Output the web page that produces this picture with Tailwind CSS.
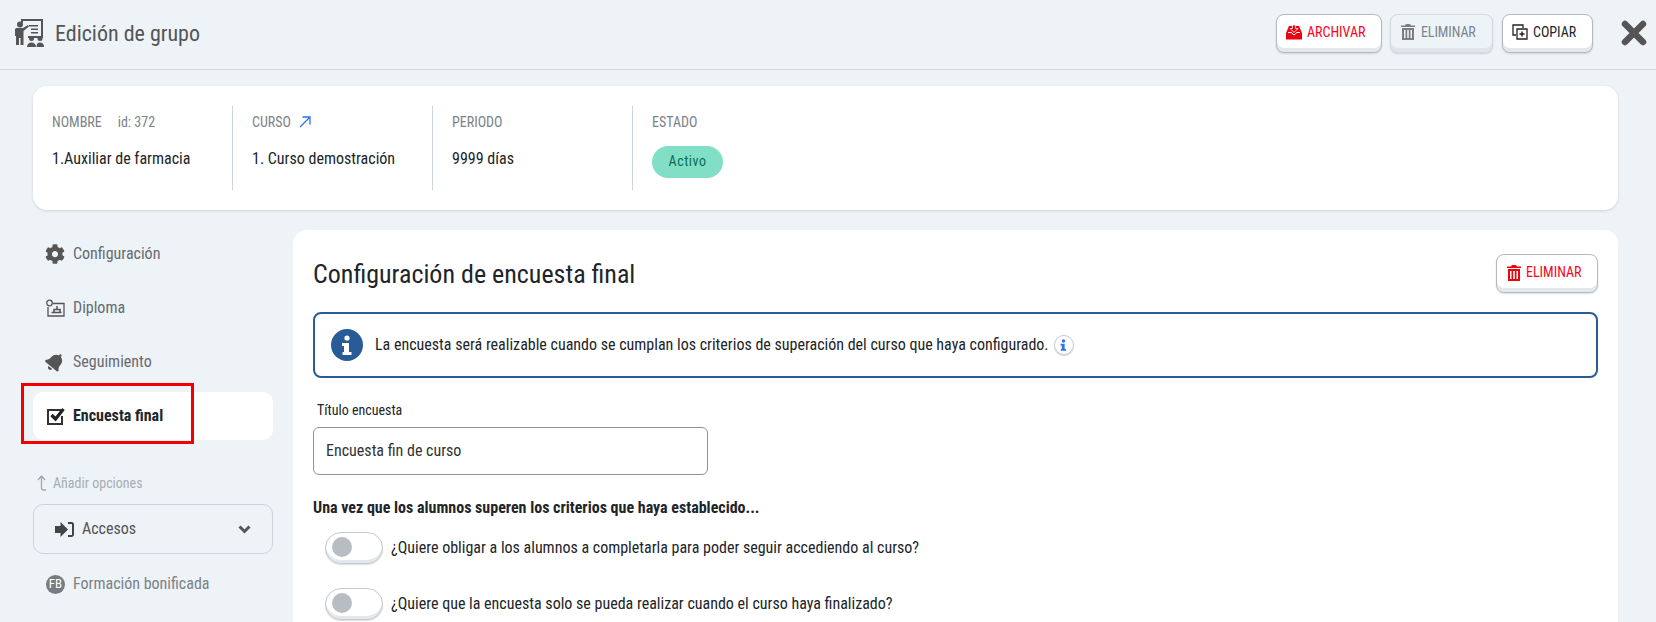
<!DOCTYPE html>
<html lang="es">
<head>
  <meta charset="UTF-8" />
  <title>Edición de grupo</title>
  <script src="https://cdn.jsdelivr.net/npm/@tailwindcss/browser@4"></script>
</head>
<body class="bg-[#eef3f7] h-[622px] overflow-hidden font-['Roboto',sans-serif] [font-stretch:75%] text-[#212529]">

  <!-- Header -->
  <header class="h-[70px] border-b border-[#d3d8dc] flex items-center pl-[14px] pb-[3px]">
    <svg class="w-[30px] h-[30px] text-[#555]" viewBox="0 0 30 30" fill="currentColor">
      <path d="M7 1h22v19h-15v-2h13V3H9v2H7z"/><path d="M15 7h9v1.500h-9zM17 10.500h7V12h-7zM17 14h7v1.500h-7z"/>
      <circle cx="6" cy="6.500" r="3"/><path d="M1 11.500c0-1 1-1.500 2-1.500h6l5-3 1 1.500-5.500 4.500v14H6.500v-7H5v7H2v-9l-1 0z"/>
      <circle cx="17.500" cy="20.500" r="2.500"/><path d="M13 29c0-3 2-4.500 4.500-4.500S22 26 22 29z"/>
      <circle cx="26" cy="20.500" r="2.500"/><path d="M22.500 29c0-3 1-4.500 3.500-4.500S30 26 30 29z"/>
    </svg>
    <h1 class="ml-[11px] text-[22px] text-[#555]">Edición de grupo</h1>
    <div class="ml-auto flex items-center">
      <button class="w-[106px] h-[39px] rounded-lg bg-white border border-[#b4bac0] shadow-[inset_0_-4px_0_#e3e8ec,0_1px_2px_#0002] flex items-center pl-[9px] gap-[5px] text-[14px] text-[#f5051d] pb-[2px]">
        <svg class="w-[16px] h-[15px]" viewBox="0 0 16 15" fill="#e8050f">
          <path d="M3 1h10l3 7v6.500H0V8z"/>
          <path d="M2 7.500h3.500l1.500 2h2l1.500-2H14" fill="none" stroke="#fff" stroke-width="1"/>
          <path d="M6.500 0h3v3.500H12L8 7.500l-4-4h2.500z" stroke="#fff" stroke-width="0.800"/>
        </svg>
        ARCHIVAR
      </button>
      <button class="ml-[8px] w-[103px] h-[39px] rounded-lg bg-[#eef3f7] border border-[#d5dade] shadow-[inset_0_-4px_0_#dfe5ea,0_1px_2px_#0002] flex items-center pl-[10px] gap-[6px] text-[14px] tracking-[-0.1px] text-[#7b858e] pb-[2px]">
        <svg class="w-[14px] h-[16px]" viewBox="0 0 14 16" fill="#7b7f84"><path d="M5 0h4l1 1.500h4V3H0V1.500h4z"/><path fill-rule="evenodd" d="M1 4h12v12H1zM3 6v8h1.500V6zM6.200 6v8h1.600V6zM9.500 6v8H11V6z"/></svg>
        ELIMINAR
      </button>
      <button class="ml-[9px] w-[91px] h-[39px] rounded-lg bg-white border border-[#b4bac0] shadow-[inset_0_-4px_0_#e3e8ec,0_1px_2px_#0002] flex items-center pl-[9px] gap-[5px] text-[14px] text-[#212529] pb-[2px]">
        <svg class="w-[16px] h-[16px]" viewBox="0 0 16 16" fill="none" stroke="#222" stroke-width="1.300"><path d="M11 4V1H1v10h3"/><path d="M5 5h10v10H5z"/><path d="M10 7.500v5M7.500 10h5" stroke-width="1.500"/></svg>
        COPIAR
      </button>
      <button class="ml-[27px] mr-[9px] w-[27px] h-[27px] flex items-center justify-center">
        <svg class="w-[26px] h-[26px]" viewBox="0 0 26 26" stroke="#555" stroke-width="6.500" stroke-linecap="round"><path d="M4 4l18 18M22 4L4 22"/></svg>
      </button>
    </div>
  </header>

  <!-- Group summary -->
  <section class="ml-[33px] mr-[38px] mt-[16px] h-[124px] bg-white rounded-[14px] shadow-[0_1px_3px_#0002] flex items-center">
    <div class="w-[200px] h-[84px] pl-[19px] border-r border-[#ccd3da]">
      <p class="flex items-center text-[14px] text-[#7b8288] h-[20px] mt-[6px]"><span class="mt-[1px]">NOMBRE</span><span class="ml-[16px]">id: 372</span></p>
      <p class="mt-[15px] text-[16px]">1.Auxiliar de farmacia</p>
    </div>
    <div class="w-[200px] h-[84px] pl-[19px] border-r border-[#ccd3da]">
      <p class="flex items-center text-[14px] text-[#7b8288] h-[20px] mt-[6px]">CURSO
        <svg class="ml-[8px] w-[12px] h-[12px]" viewBox="0 0 12 12" fill="none" stroke="#2a76e8" stroke-width="1.300"><path d="M1 11L11 1M3.500 1H11v7.500"/></svg>
      </p>
      <p class="mt-[15px] text-[16px]">1. Curso demostración</p>
    </div>
    <div class="w-[200px] h-[84px] pl-[19px] border-r border-[#ccd3da]">
      <p class="text-[14px] text-[#7b8288] h-[20px] mt-[6px] flex items-center">PERIODO</p>
      <p class="mt-[15px] text-[16px]">9999 días</p>
    </div>
    <div class="h-[84px] pl-[19px]">
      <p class="text-[14px] text-[#7b8288] h-[20px] mt-[6px] flex items-center">ESTADO</p>
      <span class="mt-[14px] w-[71px] h-[32px] rounded-full bg-[#81dfc6] text-[#0c6b56] text-[14px] tracking-[0.5px] flex items-center justify-center pb-[1px]">Activo</span>
    </div>
  </section>

  <div class="flex mt-[20px] pl-[33px] pr-[38px]">
    <!-- Sidebar -->
    <nav class="w-[240px] shrink-0 text-[16px] text-[#666b70]">
      <a class="h-[48px] flex items-center pl-[12px] gap-[8px]">
        <svg class="w-[20px] h-[20px]" viewBox="0 0 512 512" fill="#555"><path d="M487.400 315.700l-42.600-24.600c4.300-23.200 4.300-47 0-70.200l42.600-24.600c4.900-2.800 7.100-8.600 5.500-14-11.100-35.600-30-67.800-54.700-94.600-3.800-4.100-10-5.100-14.800-2.300L380.800 110c-17.900-15.400-38.500-27.300-60.800-35.100V25.800c0-5.600-3.900-10.500-9.400-11.700-36.700-8.200-74.300-7.800-109.200 0-5.500 1.200-9.400 6.100-9.400 11.700V75c-22.200 7.900-42.800 19.800-60.800 35.100L88.700 85.500c-4.900-2.800-11-1.900-14.800 2.300-24.700 26.700-43.600 58.900-54.700 94.600-1.700 5.400.6 11.200 5.500 14L67.300 221c-4.300 23.200-4.300 47 0 70.200l-42.600 24.600c-4.900 2.800-7.100 8.600-5.500 14 11.100 35.600 30 67.800 54.700 94.600 3.800 4.100 10 5.100 14.800 2.300l42.600-24.600c17.900 15.400 38.500 27.300 60.800 35.100v49.200c0 5.600 3.900 10.500 9.400 11.700 36.700 8.200 74.300 7.800 109.200 0 5.500-1.200 9.400-6.100 9.400-11.700v-49.200c22.200-7.900 42.800-19.800 60.800-35.100l42.600 24.600c4.900 2.800 11 1.900 14.800-2.300 24.700-26.700 43.600-58.900 54.700-94.600 1.500-5.500-.7-11.300-5.600-14.100zM256 336c-44.100 0-80-35.900-80-80s35.900-80 80-80 80 35.900 80 80-35.900 80-80 80z"/></svg>
        Configuración
      </a>
      <a class="h-[48px] mt-[6px] flex items-center pl-[12px] gap-[8px]">
        <svg class="w-[20px] h-[20px]" viewBox="0 0 20 20" fill="none" stroke="#555" stroke-width="1.300"><circle cx="4.500" cy="5" r="2.800"/><path d="M8 5.500h11v12.500H3V9"/><path d="M6.500 14.500h10M9 14v-2.500h6V14" stroke-width="1.600"/><path d="M12 11V8" stroke-width="1.500"/></svg>
        Diploma
      </a>
      <a class="h-[48px] mt-[6px] flex items-center pl-[12px] gap-[8px]">
        <svg class="w-[20px] h-[20px]" viewBox="-40 -10 528 532" fill="#555"><path transform="rotate(40 224 256)" d="M224 512c35.320 0 63.970-28.650 63.970-64H160.030c0 35.350 28.650 64 63.970 64zm215.390-149.710c-19.320-20.760-55.470-51.990-55.470-154.290 0-77.700-54.480-139.900-127.940-155.160V32c0-17.670-14.320-32-31.980-32s-31.980 14.330-31.980 32v20.840C118.560 68.100 64.080 130.300 64.080 208c0 102.300-36.150 133.530-55.470 154.290-6 6.450-8.660 14.160-8.610 21.710.11 16.400 12.980 32 32.100 32h383.800c19.120 0 32-15.600 32.100-32 .05-7.550-2.610-15.270-8.610-21.710z"/></svg>
        Seguimiento
      </a>
      <a class="h-[48px] mt-[6px] flex items-center pl-[13px] gap-[7px] bg-white rounded-[10px] font-bold text-[#212529] relative">
        <svg class="w-[20px] h-[20px]" viewBox="0 0 20 20" fill="none"><path d="M16 10v8H2V4h13" stroke="#333" stroke-width="2"/><path d="M5.500 9l4 4 8-10" stroke="#222" stroke-width="3.200"/></svg>
        Encuesta final
        <span class="absolute left-[-12px] top-[-9px] w-[173px] h-[61px] border-[3px] border-[#f20000]"></span>
      </a>
      <p class="mt-[33px] flex items-center text-[14px] text-[#a6adb3] pl-[4px] gap-[6px] h-[20px]">
        <svg class="w-[10px] h-[16px]" viewBox="0 0 10 16" fill="none" stroke="#a0a6ab" stroke-width="1.300"><path d="M1 5l3.500-4L8 5M4.500 1v12c0 1.500 1 2 2.500 2h2"/></svg>
        Añadir opciones
      </p>
      <div class="mt-[11px] h-[50px] border border-[#cdd4da] rounded-[10px] flex items-center pl-[21px] pr-[21px] gap-[8px] text-[#555]">
        <svg class="w-[19px] h-[15px]" viewBox="0 0 19 15" fill="#444"><path d="M0 4h5.500V0l7.500 7.500L5.500 15v-4H0z"/><path d="M13 1h3.500A1.500 1.500 0 0 1 18 2.500v10a1.500 1.500 0 0 1-1.500 1.500H13" fill="none" stroke="#444" stroke-width="2"/></svg>
        Accesos
        <svg class="ml-auto w-[13px] h-[9px]" viewBox="0 0 12 9" fill="none" stroke="#555" stroke-width="3"><path d="M1 1.500l5 5 5-5"/></svg>
      </div>
      <div class="mt-[6px] h-[48px] flex items-center pl-[13px] gap-[8px] text-[#7b8288]">
        <span class="w-[19px] h-[19px] rounded-full bg-[#777c82] text-white text-[13px] flex items-center justify-center">FB</span>
        Formación bonificada
      </div>
    </nav>

    <!-- Survey settings -->
    <main class="ml-[20px] grow h-[500px] bg-white rounded-t-[14px] px-[20px] pt-[24px]">
      <div class="flex items-center justify-between h-[39px]">
        <h2 class="text-[26px] pt-[2px]">Configuración de encuesta final</h2>
        <button class="w-[102px] h-[39px] rounded-lg bg-white border border-[#b4bac0] shadow-[inset_0_-4px_0_#e3e8ec,0_1px_2px_#0002] flex items-center pl-[10px] gap-[5px] text-[14px] text-[#f5051d] pb-[2px]">
          <svg class="w-[14px] h-[16px]" viewBox="0 0 14 16" fill="#e8050f"><path d="M5 0h4l1 1.500h4V3H0V1.500h4z"/><path fill-rule="evenodd" d="M1 4h12v12H1zM3 6v8h1.500V6zM6.200 6v8h1.600V6zM9.500 6v8H11V6z"/></svg>
          ELIMINAR
        </button>
      </div>
      <div class="mt-[19px] h-[66px] border-2 border-[#295b96] rounded-[8px] flex items-center pl-[16px] gap-[12px] text-[16px]">
        <span class="w-[32px] h-[32px] rounded-full bg-[#295b96] flex items-center justify-center">
          <svg class="w-[12px] h-[20px]" viewBox="0 0 12 20" fill="#fff"><circle cx="6" cy="3" r="2.600"/><path d="M1 8h7v9h2.500v3h-9v-3H3v-6H1z"/></svg>
        </span>
        <p>La encuesta será realizable cuando se cumplan los criterios de superación del curso que haya configurado.</p>
        <span class="ml-[-7px] w-[20px] h-[20px] rounded-full border border-[#c3cad0] shadow-[0_1px_1px_#0003] flex items-center justify-center">
          <svg class="w-[7px] h-[12px]" viewBox="0 0 12 20" fill="#2a76e8"><circle cx="6" cy="3" r="3"/><path d="M1 8h7v9h2.500v3h-9v-3H3v-6H1z"/></svg>
        </span>
      </div>
      <label class="block mt-[23px] ml-[4px] text-[14px] h-[18px] leading-[18px]">Título encuesta</label>
      <div class="mt-[8px] w-[395px] h-[48px] border border-[#8f9397] rounded-[6px] flex items-center pl-[12px] text-[16px] text-[#333]">Encuesta fin de curso</div>
      <p class="mt-[23px] font-bold text-[16px] h-[20px] leading-[20px]">Una vez que los alumnos superen los criterios que haya establecido...</p>
      <div class="mt-[14px] flex items-center gap-[8px] ml-[12px] text-[16px]">
        <span class="w-[58px] h-[32px] rounded-full bg-white border border-[#c3cad0] shadow-[inset_0_-3px_0_#e3e8ec,0_1px_1px_#0002] flex items-center pl-[6px] pb-[2px]"><span class="w-[20px] h-[20px] rounded-full bg-[#b7bdc3]"></span></span>
        <p>¿Quiere obligar a los alumnos a completarla para poder seguir accediendo al curso?</p>
      </div>
      <div class="mt-[24px] flex items-center gap-[8px] ml-[12px] text-[16px]">
        <span class="w-[58px] h-[32px] rounded-full bg-white border border-[#c3cad0] shadow-[inset_0_-3px_0_#e3e8ec,0_1px_1px_#0002] flex items-center pl-[6px] pb-[2px]"><span class="w-[20px] h-[20px] rounded-full bg-[#b7bdc3]"></span></span>
        <p>¿Quiere que la encuesta solo se pueda realizar cuando el curso haya finalizado?</p>
      </div>
    </main>
  </div>
</body>
</html>
